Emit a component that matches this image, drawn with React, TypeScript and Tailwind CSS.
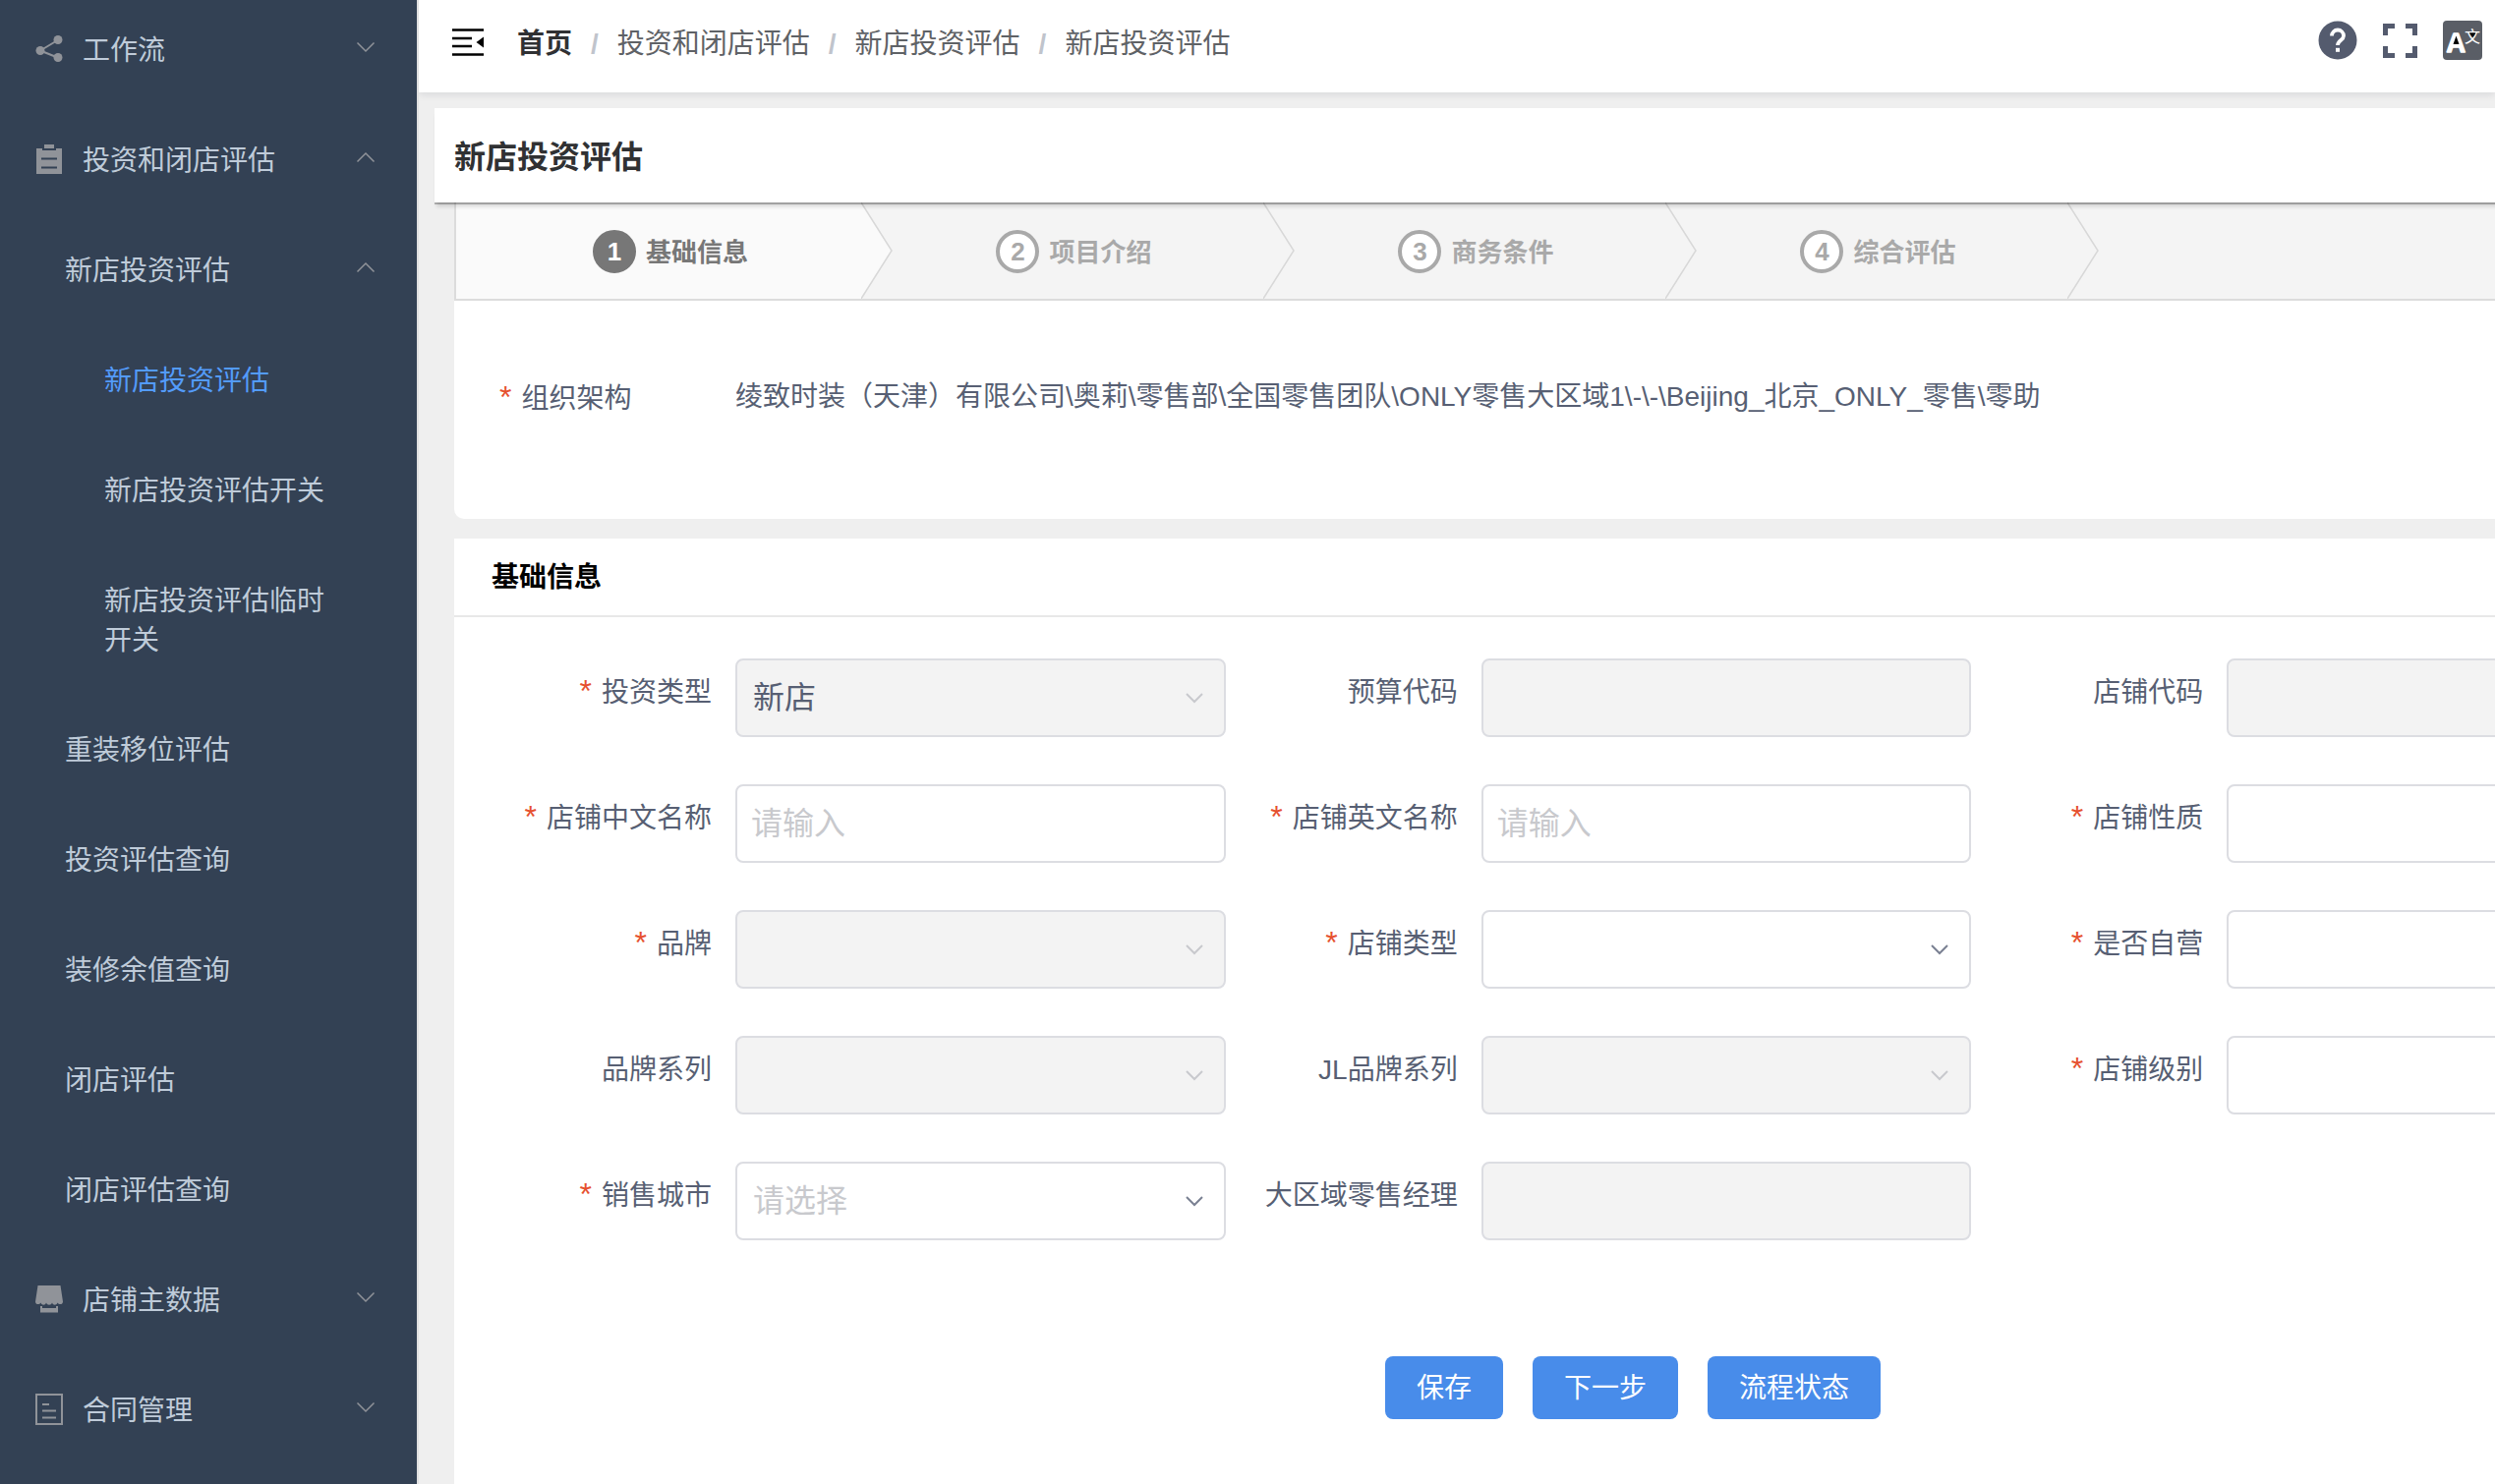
import React from 'react';
import clsx from 'clsx';

type MenuItem = {
  label: string;
  level: 1 | 2 | 3;
  icon?: React.ReactNode;
  arrow?: 'up' | 'down';
  active?: boolean;
};

type FormField = {
  id: string;
  label: string;
  kind: 'input' | 'select';
  required?: boolean;
  disabled?: boolean;
  placeholder?: string;
  value?: string;
};

const ShareIcon = () => (
  <svg width="28" height="28" viewBox="0 0 28 28" fill="currentColor" aria-hidden="true">
    <path d="M5 15.500 22.500 5M5 15.500 22.500 22.500" stroke="currentColor" strokeWidth="2" />
    <circle cx="5" cy="15.500" r="4.500" />
    <circle cx="23" cy="4.500" r="4.500" />
    <circle cx="23" cy="22.500" r="4.500" />
  </svg>
);

const ClipboardIcon = () => (
  <svg width="28" height="30" viewBox="0 0 28 30" fill="currentColor" aria-hidden="true">
    <path d="M9 0h10v4H9z" />
    <path d="M1 4h6v2h14V4h6v26H1z" />
    <path d="M6 14.500h16M6 23.500h16" stroke="#334154" strokeWidth="2" />
  </svg>
);

const ShopIcon = () => (
  <svg width="28" height="28" viewBox="0 0 28 28" fill="currentColor" aria-hidden="true">
    <path d="M2.500 0h23L28 16.500c0 3-4 3.500-5.500 1-1 3-4.500 3-5.500 0-1 3-5 3-6 0-1 3-4.500 3-5.500 0C4 20 0 19.500 0 16.500z" />
    <path d="M5 21h2v2h14v-2h2v6.500H5z" />
  </svg>
);

const ContractIcon = () => (
  <svg width="28" height="32" viewBox="0 0 28 32" fill="none" stroke="currentColor" strokeWidth="2" aria-hidden="true">
    <path d="M1 1h26v30H1zM7 11h7M7 17.500h14M7 24.500h14" />
  </svg>
);

const menu: MenuItem[] = [
  { label: '工作流', level: 1, icon: <ShareIcon />, arrow: 'down' },
  { label: '投资和闭店评估', level: 1, icon: <ClipboardIcon />, arrow: 'up' },
  { label: '新店投资评估', level: 2, arrow: 'up' },
  { label: '新店投资评估', level: 3, active: true },
  { label: '新店投资评估开关', level: 3 },
  { label: '新店投资评估临时开关', level: 3 },
  { label: '重装移位评估', level: 2 },
  { label: '投资评估查询', level: 2 },
  { label: '装修余值查询', level: 2 },
  { label: '闭店评估', level: 2 },
  { label: '闭店评估查询', level: 2 },
  { label: '店铺主数据', level: 1, icon: <ShopIcon />, arrow: 'down' },
  { label: '合同管理', level: 1, icon: <ContractIcon />, arrow: 'down' },
];

const crumbs = ['首页', '投资和闭店评估', '新店投资评估', '新店投资评估'];

const steps = ['基础信息', '项目介绍', '商务条件', '综合评估'];

const fields: FormField[] = [
  { id: 'investType', label: '投资类型', kind: 'select', required: true, disabled: true, value: '新店' },
  { id: 'budgetCode', label: '预算代码', kind: 'input', disabled: true },
  { id: 'shopCode', label: '店铺代码', kind: 'input', disabled: true },
  { id: 'shopNameCn', label: '店铺中文名称', kind: 'input', required: true, placeholder: '请输入' },
  { id: 'shopNameEn', label: '店铺英文名称', kind: 'input', required: true, placeholder: '请输入' },
  { id: 'shopNature', label: '店铺性质', kind: 'select', required: true },
  { id: 'brand', label: '品牌', kind: 'select', required: true, disabled: true },
  { id: 'shopType', label: '店铺类型', kind: 'select', required: true },
  { id: 'selfRun', label: '是否自营', kind: 'select', required: true },
  { id: 'brandSeries', label: '品牌系列', kind: 'select', disabled: true },
  { id: 'jlBrandSeries', label: 'JL品牌系列', kind: 'select', disabled: true },
  { id: 'shopLevel', label: '店铺级别', kind: 'select', required: true },
  { id: 'city', label: '销售城市', kind: 'select', required: true, placeholder: '请选择' },
  { id: 'manager', label: '大区域零售经理', kind: 'input', disabled: true },
];

const Sidebar = () => (
  <aside className="w-[426px] shrink-0 overflow-hidden border-r-2 border-[#e0e0e0] bg-[#334154]">
    <nav className="-mt-1.5">
      {menu.map((item, index) => (
        <a
          key={index}
          href="#"
          className={clsx(
            'flex min-h-28 items-center py-[34px] pr-[42px] text-[28px] leading-10',
            item.level === 1 && 'pl-9',
            item.level === 2 && 'pl-[66px]',
            item.level === 3 && 'pl-[106px]',
            item.active ? 'text-[#539bfa]' : 'text-[#bfcbd9]'
          )}
        >
          {item.icon && <span className="mr-5 shrink-0 text-[#909399]">{item.icon}</span>}
          <span className={clsx('flex-1 pt-1', item.level === 3 && 'pr-10')}>{item.label}</span>
          {item.arrow && (
            <svg
              width="20"
              height="12"
              viewBox="0 0 20 12"
              fill="none"
              stroke="#909399"
              strokeWidth="1.500"
              className={clsx('mb-1 shrink-0', item.arrow === 'up' && 'rotate-180')}
              aria-hidden="true"
            >
              <path d="M1.500 1.500 10 10l8.500-8.500" />
            </svg>
          )}
        </a>
      ))}
    </nav>
  </aside>
);

const Header = () => (
  <header className="relative flex h-[94px] items-center bg-white pb-2 pl-[34px] pr-[13px] shadow-[0_2px_8px_rgba(0,21,41,0.1)]">
    <button type="button" aria-label="收起菜单">
      <svg width="32" height="28" viewBox="0 0 32 28" aria-hidden="true">
        <path d="M0 1.500h32M0 10h20M0 18h20M0 26.500h32" stroke="#000" strokeWidth="2.500" />
        <path d="M32 8.500v11L24.500 14z" />
      </svg>
    </button>
    <nav className="ml-[34px] flex pt-1 text-[28px] leading-10 text-[#5f6266]">
      {crumbs.map((crumb, index) => (
        <React.Fragment key={index}>
          {index > 0 && <span className="mx-[19px] font-bold text-[#c0c4cc]">/</span>}
          <a href="#" className={clsx(index === 0 && 'font-bold text-[#303133]')}>
            {crumb}
          </a>
        </React.Fragment>
      ))}
    </nav>
    <div className="ml-auto flex items-center gap-[26px] pb-1 text-[#545b6e]">
      <button type="button" aria-label="帮助">
        <svg width="40" height="40" viewBox="0 0 40 40" aria-hidden="true">
          <circle cx="20" cy="20" r="19.500" fill="currentColor" />
          <path d="M14 15.500a6 6 0 1 1 12 0c0 4.500-6 4.500-6 9.500" fill="none" stroke="#fff" strokeWidth="3.800" />
          <path d="M18 27.800h4v4h-4z" fill="#fff" />
        </svg>
      </button>
      <button type="button" aria-label="全屏">
        <svg width="35" height="35" viewBox="0 0 35 35" fill="none" stroke="currentColor" strokeWidth="5" aria-hidden="true">
          <path d="M2.500 12V2.500H12M23 2.500h9.500V12M32.500 23v9.500H23M12 32.500H2.500V23" />
        </svg>
      </button>
      <button type="button" aria-label="语言">
        <svg width="40" height="40" viewBox="0 0 40 40" aria-hidden="true">
          <rect width="40" height="40" rx="4" fill="#5a5e66" />
          <text
            x="3.500"
            y="32"
            fontSize="27"
            fontWeight="bold"
            fill="#fff"
            stroke="#fff"
            strokeWidth="1.500"
            strokeLinejoin="round"
            className="font-['Liberation_Sans',sans-serif]"
          >
            A
          </text>
          <text x="22" y="22" fontSize="16" fill="#fff" className="font-['Noto_Sans_CJK_SC',sans-serif]">
            文
          </text>
          <path d="M13.500 15.500 16.500 24h-6z" fill="#000" />
          <path d="M27 12.500h6.500l-3.200 4.500z" fill="#000" />
        </svg>
      </button>
    </div>
  </header>
);

const StepBar = () => (
  <ol className="flex h-[100px] border-b-2 border-l-2 border-[#dcdcdc] bg-[#f4f4f4]">
    {steps.map((step, index) => (
      <li
        key={step}
        className={clsx(
          'relative flex items-center justify-center gap-2.5 pl-6 pt-0.5 text-[26px] font-bold',
          index === 0 ? 'w-[412px] bg-[#fafafa] text-[#777]' : 'w-[409px] text-[#a9a9a9]'
        )}
      >
        <span
          className={clsx(
            'flex size-11 items-center justify-center rounded-full border-4 leading-none',
            index === 0 ? 'border-[#777] bg-[#777] text-white' : 'border-[#a9a9a9] bg-white'
          )}
        >
          {index + 1}
        </span>
        <span className="pt-0.5">{step}</span>
        <svg
          width="32"
          height="98"
          viewBox="0 0 32 98"
          className="absolute left-full top-0 z-10"
          fill={index === 0 ? '#fafafa' : '#f4f4f4'}
          stroke="#d8d8d8"
          strokeWidth="1.500"
          aria-hidden="true"
        >
          <path d="M0 0 31 49 0 98" />
        </svg>
      </li>
    ))}
  </ol>
);

const Required = () => <span className="mr-2.5 text-[32px] leading-none text-[#e6502e]">*</span>;

const Field = ({ field }: { field: FormField }) => {
  const control = clsx(
    'h-20 w-full appearance-none rounded-lg border-2 border-[#dcdde2] text-[32px] placeholder:text-[#c8c9cd] disabled:bg-[#f3f3f3] disabled:opacity-100',
    field.kind === 'select' ? 'px-4' : 'px-3.5',
    field.kind === 'select' && field.placeholder ? 'text-[#c8c9cd]' : 'text-[#575f73]'
  );

  return (
    <div className="flex pr-5">
      <label htmlFor={field.id} className="h-20 w-60 shrink-0 whitespace-nowrap pr-6 text-right text-[28px] leading-[70px]">
        {field.required && <Required />}
        {field.label}
      </label>
      <div className="relative flex-1">
        {field.kind === 'input' ? (
          <input id={field.id} type="text" placeholder={field.placeholder} disabled={field.disabled} className={control} />
        ) : (
          <>
            <select id={field.id} disabled={field.disabled} className={control}>
              <option>{field.value ?? field.placeholder ?? ''}</option>
            </select>
            <svg
              width="20"
              height="12"
              viewBox="0 0 20 12"
              fill="none"
              strokeWidth="2"
              className={clsx(
                'pointer-events-none absolute right-[22px] top-[34px]',
                field.disabled ? 'stroke-[#c8c9cd]' : 'stroke-[#7a8092]'
              )}
              aria-hidden="true"
            >
              <path d="M2 2l8 8 8-8" />
            </svg>
          </>
        )}
      </div>
    </div>
  );
};

const App: React.FC = () => {
  return (
    <div className="flex min-h-screen bg-[#efefef] font-['Liberation_Sans','Noto_Sans_CJK_SC',sans-serif] text-[#575f73]">
      <Sidebar />
      <div className="flex min-w-0 flex-1 flex-col overflow-hidden">
        <Header />
        <main className="flex min-w-[2454px] flex-1 flex-col pl-4 pt-4">
          <div className="relative z-20 flex h-24 items-center bg-white pl-5 pt-1 shadow-[0_2px_0_rgba(0,0,0,0.25),0_6px_4px_-2px_rgba(0,0,0,0.15)]">
            <h1 className="text-[32px] font-bold text-[#303133]">新店投资评估</h1>
          </div>

          <div className="flex flex-1 flex-col pl-5 pr-5">
            <section className="rounded-b-[10px] bg-white">
              <StepBar />
              <div className="flex items-start pb-[100px] pl-[46px] pt-[76px] text-[28px] leading-[44px]">
                <span className="w-60 pt-0.5">
                  <Required />
                  组织架构
                </span>
                <span>绫致时装（天津）有限公司\奥莉\零售部\全国零售团队\ONLY零售大区域1\-\-\Beijing_北京_ONLY_零售\零助</span>
              </div>
            </section>

            <section className="mt-5 flex-1 bg-white">
              <h2 className="h-20 border-b-2 border-[#e8e8e8] pl-[38px] text-[28px] font-bold leading-[80px] text-black">
                基础信息
              </h2>
              <form>
                <div className="grid grid-cols-3 gap-y-12 pl-[46px] pr-[76px] pt-[42px]">
                  {fields.map((field) => (
                    <Field key={field.id} field={field} />
                  ))}
                </div>
                <div className="mt-[118px] flex justify-center gap-[30px] pb-10">
                  {['保存', '下一步', '流程状态'].map((label) => (
                    <button key={label} type="button" className="h-16 rounded-lg bg-[#488cea] px-8 pt-0.5 text-[28px] text-white">
                      {label}
                    </button>
                  ))}
                </div>
              </form>
            </section>
          </div>
        </main>
      </div>
    </div>
  );
};

export default App;
